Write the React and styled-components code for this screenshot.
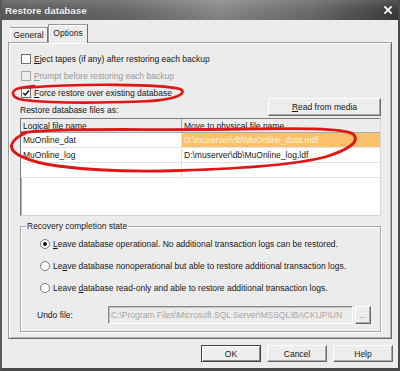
import React from "react";
import styled, { createGlobalStyle } from "styled-components";

const GlobalStyle = createGlobalStyle`
  html, body { margin: 0; padding: 0; background: #ececec; }
  body { font-family: "Liberation Sans", Arial, sans-serif; font-size: 8.5px; color: #161616; }
  * { box-sizing: border-box; }
`;

const Window = styled.div`
  position: relative;
  width: 400px;
  height: 371px;
  display: flex;
  flex-direction: column;
  background: #ececec;
  border-left: 2px solid #5a5a5a;
  border-right: 2px solid #4a4a4a;
  border-bottom: 3px solid #4a4a4a;
  overflow: hidden;
`;

const TitleBar = styled.div`
  height: 20px;
  flex: none;
  display: flex;
  align-items: center;
  justify-content: space-between;
  padding: 0 6px 0 3px;
  background:
    linear-gradient(to bottom, rgba(255,255,255,0.12), rgba(255,255,255,0) 45%, rgba(0,0,0,0.08)),
    linear-gradient(to right, #5e5e5e 0%, #686868 30%, #8a8a8a 55%, #6c6c6c 78%, #3c3c3c 100%);
`;

const Title = styled.span`
  color: #f4f4f4;
  font-weight: bold;
  font-size: 9.8px;
  text-shadow: 0 0 1px rgba(0,0,0,0.4);
`;

const TabRow = styled.div`
  height: 22px;
  flex: none;
  display: flex;
  align-items: flex-end;
  padding-left: 8px;
  position: relative;
  z-index: 2;
`;

const Tab = styled.div`
  height: ${(p) => (p.$active ? "19px" : "15px")};
  width: ${(p) => p.$w}px;
  margin-bottom: ${(p) => (p.$active ? "-1px" : "0")};
  display: flex;
  align-items: center;
  justify-content: center;
  padding-bottom: ${(p) => (p.$active ? "2px" : "0")};
  background: #ececec;
  border: 1px solid #9a9a9a;
  border-bottom: none;
  border-right-color: #6e6e6e;
  border-left: ${(p) => (p.$active ? "1px solid #9a9a9a" : "none")};
  box-shadow: inset 1px 1px 0 #fff;
  color: #1a1a1a;
`;

const Panel = styled.div`
  height: 297px;
  flex: none;
  margin: 0 6px;
  padding: 9px 10px 0 11px;
  display: flex;
  flex-direction: column;
  border: 1px solid;
  border-color: #a0a0a0 #6a6a6a #6a6a6a #a0a0a0;
  box-shadow: inset 1px 1px 0 #fff, inset -1px -1px 0 #b4b4b4;
`;

const CheckList = styled.div`
  display: flex;
  flex-direction: column;
  gap: 4px;
`;

const CheckRow = styled.label`
  height: 13px;
  display: flex;
  align-items: center;
  gap: 3px;
  padding-left: 1px;
  color: ${(p) => (p.$disabled ? "#9a9a9a" : "#161616")};
`;

const Box = styled.span`
  width: 10px;
  height: 10px;
  flex: none;
  display: flex;
  align-items: center;
  justify-content: center;
  background: ${(p) => (p.$disabled ? "#ececec" : "#fff")};
  border: 1px solid ${(p) => (p.$disabled ? "#a8a8a8" : "#707070")};
`;

const ToolRow = styled.div`
  height: 18px;
  margin-top: -1px;
  display: flex;
  align-items: flex-end;
  justify-content: space-between;
`;

const SmallLabel = styled.span`
  padding-bottom: 1px;
  line-height: 10px;
`;

const Button = styled.div`
  width: ${(p) => p.$w}px;
  height: ${(p) => p.$h || 17}px;
  flex: none;
  display: flex;
  align-items: center;
  justify-content: center;
  background: #ededed;
  color: ${(p) => (p.$disabled ? "#9a9a9a" : "#161616")};
  border: 1px solid;
  border-color: ${(p) => (p.$default ? "#404040" : "#fff #6a6a6a #6a6a6a #fff")};
  box-shadow: ${(p) =>
    p.$default
      ? "inset 1px 1px 0 #fff, inset -1px -1px 0 #8a8a8a"
      : "inset -1px -1px 0 #a8a8a8"};
`;

const Table = styled.div`
  margin-top: 2px;
  height: 98px;
  background: #fff;
  border: 1px solid;
  border-color: #7a7a7a #d8d8d8 #d8d8d8 #7a7a7a;
  box-shadow: inset 1px 1px 0 #b0b0b0;
  display: flex;
  flex-direction: column;
  overflow: hidden;
`;

const Row = styled.div`
  display: grid;
  grid-template-columns: 161px 1fr;
  flex: none;
  height: ${(p) => (p.$header ? 14 : 15)}px;
  background: ${(p) => (p.$header ? "#ececec" : "#fff")};
  border-bottom: 1px solid ${(p) => (p.$header ? "#a8a8a8" : "#e4e4e4")};
`;

const Cell = styled.div`
  display: flex;
  align-items: ${(p) => (p.$header ? "flex-end" : "center")};
  padding: 0 0 ${(p) => (p.$header ? "1px" : "0")} 2px;
  white-space: nowrap;
  overflow: hidden;
  background: ${(p) => (p.$selected ? "#fcc16d" : "transparent")};
  color: ${(p) => (p.$selected ? "#fff2dc" : "#161616")};
  border-right: 1px solid ${(p) => (p.$header ? "#a8a8a8" : "#e0e0e0")};
  &:last-child { border-right: none; }
`;

const Group = styled.fieldset`
  margin: 5px 0 0 0;
  padding: 0 0 7px 0;
  min-width: 0;
  border: 1px solid #a4a4a4;
  box-shadow: inset 1px 1px 0 #fff, 1px 1px 0 #fff;
  display: flex;
  flex-direction: column;
`;

const Legend = styled.legend`
  margin-left: 5px;
  padding: 0 1px;
  line-height: 10px;
`;

const RadioList = styled.div`
  padding-top: 6px;
  display: flex;
  flex-direction: column;
  gap: 9px;
`;

const RadioRow = styled.label`
  height: 13px;
  display: flex;
  align-items: center;
  gap: 3px;
  padding-left: 19px;
`;

const Radio = styled.span`
  width: 10px;
  height: 10px;
  flex: none;
  border-radius: 50%;
  background: #fff;
  border: 1px solid #7a7a7a;
  display: flex;
  align-items: center;
  justify-content: center;
  &::after {
    content: "";
    width: 4px;
    height: 4px;
    border-radius: 50%;
    background: ${(p) => (p.$checked ? "#111" : "transparent")};
  }
`;

const UndoRow = styled.div`
  margin-top: 12px;
  height: 18px;
  display: flex;
  align-items: center;
  padding-left: 16px;
`;

const UndoLabel = styled.span`
  width: 71px;
  flex: none;
`;

const PathInput = styled.div`
  width: 245px;
  height: 18px;
  flex: none;
  display: flex;
  align-items: center;
  padding-left: 2px;
  white-space: nowrap;
  overflow: hidden;
  color: #a6a6a6;
  background: #ececec;
  border: 1px solid;
  border-color: #8a8a8a #fff #fff #8a8a8a;
  box-shadow: inset 1px 1px 0 #c0c0c0;
  margin-right: 2px;
`;

const ButtonRow = styled.div`
  margin-top: 6px;
  padding-right: 5px;
  display: flex;
  justify-content: flex-end;
  gap: 6px;
`;

const Overlay = styled.svg`
  position: absolute;
  top: 0;
  left: -2px;
  width: 400px;
  height: 371px;
  pointer-events: none;
  z-index: 5;
`;

const CloseIcon = () => (
  <svg width="8" height="8" viewBox="0 0 8 8">
    <path d="M1 1 L7 7 M7 1 L1 7" stroke="#fafafa" strokeWidth="1.8" strokeLinecap="square" />
  </svg>
);

const Check = () => (
  <svg width="8" height="8" viewBox="0 0 8 8">
    <path d="M1.2 4 L3.2 6 L7 1.6" fill="none" stroke="#111" strokeWidth="1.5" />
  </svg>
);

const CheckItem = ({ checked, disabled, children }) => (
  <CheckRow $disabled={disabled}>
    <Box $disabled={disabled}>{checked && <Check />}</Box>
    <span>{children}</span>
  </CheckRow>
);

export default function App() {
  return (
    <>
      <GlobalStyle />
      <Window>
        <TitleBar>
          <Title>Restore database</Title>
          <CloseIcon />
        </TitleBar>
        <TabRow>
          <Tab $w={38}>General</Tab>
          <Tab $w={40} $active>Options</Tab>
        </TabRow>
        <Panel>
          <CheckList>
            <CheckItem><u>E</u>ject tapes (if any) after restoring each backup</CheckItem>
            <CheckItem disabled><u>P</u>rompt before restoring each backup</CheckItem>
            <CheckItem checked><u>F</u>orce restore over existing database</CheckItem>
          </CheckList>
          <ToolRow>
            <SmallLabel>Restore database files as:</SmallLabel>
            <Button $w={113} $h={18}><span><u>R</u>ead from media</span></Button>
          </ToolRow>
          <Table>
            <Row $header>
              <Cell $header>Logical file name</Cell>
              <Cell $header>Move to physical file name</Cell>
            </Row>
            <Row>
              <Cell>MuOnline_dat</Cell>
              <Cell $selected>D:\muserver\db\MuOnline_data.mdf</Cell>
            </Row>
            <Row>
              <Cell>MuOnline_log</Cell>
              <Cell>D:\muserver\db\MuOnline_log.ldf</Cell>
            </Row>
            <Row>
              <Cell />
              <Cell />
            </Row>
          </Table>
          <Group>
            <Legend>Recovery completion state</Legend>
            <RadioList>
              <RadioRow>
                <Radio $checked />
                <span><u>L</u>eave database operational. No additional transaction logs can be restored.</span>
              </RadioRow>
              <RadioRow>
                <Radio />
                <span>Le<u>a</u>ve database nonoperational but able to restore additional transaction logs.</span>
              </RadioRow>
              <RadioRow>
                <Radio />
                <span>Leave <u>d</u>atabase read-only and able to restore additional transaction logs.</span>
              </RadioRow>
            </RadioList>
            <UndoRow>
              <UndoLabel>Undo file:</UndoLabel>
              <PathInput>C:\Program Files\Microsoft SQL Server\MSSQL\BACKUP\UN</PathInput>
              <Button $w={16} $h={18} $disabled>...</Button>
            </UndoRow>
          </Group>
        </Panel>
        <ButtonRow>
          <Button $w={60} $default>OK</Button>
          <Button $w={60}>Cancel</Button>
          <Button $w={60}>Help</Button>
        </ButtonRow>
        <Overlay viewBox="0 0 400 371">
          <path
            d="M30 87.5 C80 83.5 160 84 180 89 C188 93 178 100 140 101.5 C100 103 50 103 24 100 C10 98 10 90 20 88 C24 87 28 86.5 34 86"
            fill="none" stroke="#e01515" strokeWidth="2.6" strokeLinecap="round"
          />
          <path
            d="M22 133 C50 128 130 130 200 129.5 C270 129 340 126 353 134 C362 142 345 151 325 157 C290 166 230 169 180 170.5 C130 172 88 170 58 166 C28 162 8 153 12 144 C14 139 18 136 26 133"
            fill="none" stroke="#e01515" strokeWidth="2.8" strokeLinecap="round"
          />
        </Overlay>
      </Window>
    </>
  );
}
